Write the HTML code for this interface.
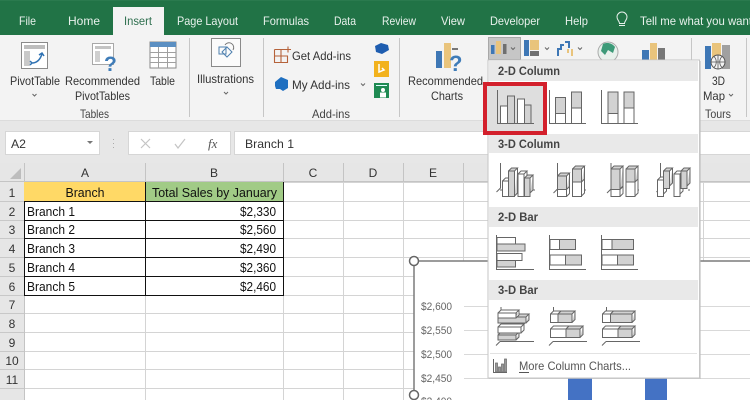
<!DOCTYPE html>
<html><head><meta charset="utf-8">
<style>
html,body{margin:0;padding:0;width:750px;height:400px;overflow:hidden;background:#fff}
svg{display:block;filter:blur(.3px)}
text{font-family:"Liberation Sans",sans-serif;font-size:12px;fill:#333}
.tab{fill:#e8f1ec;font-size:12px}
.hd{fill:#444;font-weight:bold;font-size:11.5px}
.c{fill:#111;font-size:12.5px}
.ax{fill:none;stroke:#666;stroke-width:1}
.w{fill:#fff;stroke:#666;stroke-width:1}
.g{fill:#d2d2d2;stroke:#666;stroke-width:1}
.gl{stroke:#d4d4d4;stroke-width:1}
.tb{stroke:#111;stroke-width:1}
.ch{fill:none;stroke:#666;stroke-width:1}
</style></head><body>
<svg width="750" height="400" viewBox="0 0 750 400" xmlns="http://www.w3.org/2000/svg">
<rect width="750" height="400" fill="#fff"/>
<!-- title/tabs -->
<rect width="750" height="35" fill="#217346"/>
<rect y="0" width="750" height="1" fill="#2a7a4e"/>
<rect x="113" y="7" width="51" height="28" fill="#f3f3f3"/>
<text class="tab" x="19" y="25" textLength="17" lengthAdjust="spacingAndGlyphs">File</text>
<text class="tab" x="68" y="25" textLength="32" lengthAdjust="spacingAndGlyphs">Home</text>
<text x="124" y="25" textLength="28" lengthAdjust="spacingAndGlyphs" style="fill:#2f6f4f">Insert</text>
<text class="tab" x="177" y="25" textLength="61" lengthAdjust="spacingAndGlyphs">Page Layout</text>
<text class="tab" x="263" y="25" textLength="46" lengthAdjust="spacingAndGlyphs">Formulas</text>
<text class="tab" x="334" y="25" textLength="22" lengthAdjust="spacingAndGlyphs">Data</text>
<text class="tab" x="382" y="25" textLength="34" lengthAdjust="spacingAndGlyphs">Review</text>
<text class="tab" x="441" y="25" textLength="24" lengthAdjust="spacingAndGlyphs">View</text>
<text class="tab" x="490" y="25" textLength="50" lengthAdjust="spacingAndGlyphs">Developer</text>
<text class="tab" x="565" y="25" textLength="23" lengthAdjust="spacingAndGlyphs">Help</text>
<path d="M619 25.500h6M619.500 23.500c0-2.500-2.500-3.500-2.500-6.500a5 5 0 0 1 10 0c0 3-2.500 4-2.500 6.500z" fill="none" stroke="#e8f1ec" stroke-width="1"/>
<text class="tab" x="640" y="25" textLength="112" lengthAdjust="spacingAndGlyphs">Tell me what you want</text>
<!-- ribbon -->
<rect y="35" width="750" height="86" fill="#f3f3f3"/>
<rect y="120" width="750" height="1" fill="#dcdcdc"/>
<rect y="121" width="750" height="42" fill="#e7e7e7"/>
<g stroke="#c6c6c6" stroke-width="1">
<path d="M189.500 38v79M263.500 38v79M399.500 38v79M691.500 38v79M746.500 38v79"/>
</g>
<!-- PivotTable icon -->
<rect x="21.500" y="42.500" width="26" height="26" fill="#fff" stroke="#8a8a8a"/>
<rect x="24" y="45" width="21" height="4" fill="#bdbdbd"/>
<rect x="24" y="51" width="6" height="15" fill="#c9c9c9"/>
<path d="M32 63c5 0 8-3 10-9M39 55l3-2 2 3M30 61l2 2-2 2" fill="none" stroke="#2f72b3" stroke-width="1.500"/>
<!-- Rec pivot icon -->
<rect x="92.500" y="43.500" width="21" height="21" fill="#fff" stroke="#a8a8a8"/>
<rect x="95" y="46" width="16" height="3" fill="#c4c4c4"/>
<rect x="95" y="51" width="5" height="11" fill="#cfcfcf"/>
<text x="104" y="71" style="font-size:21px;font-weight:bold;fill:#3f7cb8">?</text>
<!-- Table icon -->
<rect x="150" y="42" width="26" height="26" fill="#fff" stroke="#8a8a8a"/>
<rect x="150" y="42" width="26" height="5" fill="#5b8fc2"/>
<path d="M150 52.500h26M150 57.500h26M150 62.500h26M158.500 47v21M167.500 47v21" stroke="#a0a0a0" fill="none"/>
<text x="10" y="85" textLength="50" lengthAdjust="spacingAndGlyphs">PivotTable</text>
<path class="ch" d="M32.500 94l2 2 2-2"/>
<text x="65" y="85" textLength="75" lengthAdjust="spacingAndGlyphs">Recommended</text>
<text x="75" y="100" textLength="55" lengthAdjust="spacingAndGlyphs">PivotTables</text>
<text x="150" y="85" textLength="25" lengthAdjust="spacingAndGlyphs">Table</text>
<text x="80" y="118" textLength="29" lengthAdjust="spacingAndGlyphs" style="fill:#444">Tables</text>
<!-- Illustrations -->
<rect x="211.500" y="38.500" width="29" height="28" fill="#fbfbfb" stroke="#8a8a8a"/>
<path d="M219 47h7v7h-7zM227 47l5 5-5 5-5-5z" fill="none" stroke="#4d7fae"/>
<path d="M225 45a4.500 4.500 0 0 1 8 5" fill="none" stroke="#777"/>
<text x="197" y="83" textLength="57" lengthAdjust="spacingAndGlyphs">Illustrations</text>
<path class="ch" d="M224 92l2 2 2-2"/>
<!-- Add-ins -->
<path d="M274.500 49.500h13M274.500 49.500v13h13v-7M274.500 56h13M281 49.500v13M288 46.500v6M285 49.500h6" fill="none" stroke="#b5623a" stroke-width="1.100"/>
<text x="292" y="60" textLength="59" lengthAdjust="spacingAndGlyphs">Get Add-ins</text>
<path d="M275 82l6-5 7 3v8l-5 3-3-2h-4l-1-3z" fill="#1f6fc0"/>
<text x="292" y="89" textLength="58" lengthAdjust="spacingAndGlyphs">My Add-ins</text>
<path class="ch" d="M361 83.500l2 2 2-2"/>
<path d="M375 46l6-3 7 2 1 5-7 4-6-2z" fill="#1e5db0"/>
<rect x="374" y="61" width="15" height="16" fill="#f2b21d"/>
<path d="M379 64v8l5-2-2-2" fill="none" stroke="#fff" stroke-width="1.500"/>
<rect x="374" y="83" width="15" height="15" fill="#1e8a52"/>
<path d="M376 85.500h11" stroke="#dff" stroke-width="1"/>
<circle cx="383" cy="90" r="2" fill="#fff"/><rect x="380" y="92.500" width="6" height="5" fill="#fff"/>
<text x="312" y="118" textLength="38" lengthAdjust="spacingAndGlyphs" style="fill:#444">Add-ins</text>
<!-- Rec charts -->
<rect x="436" y="51" width="6" height="17" fill="#3e77b5"/>
<rect x="444" y="43" width="7" height="25" fill="#e9c47c"/>
<rect x="452" y="48" width="6" height="2" fill="#777"/>
<text x="449" y="71" style="font-size:22px;font-weight:bold;fill:#3f7cb8">?</text>
<text x="408" y="85" textLength="75" lengthAdjust="spacingAndGlyphs">Recommended</text>
<text x="431" y="100" textLength="32" lengthAdjust="spacingAndGlyphs">Charts</text>
<!-- small chart buttons -->
<rect x="488.500" y="37.500" width="32" height="22" fill="#c6c6c6" stroke="#a8a8a8"/>
<rect x="491" y="45" width="3.500" height="9" fill="#3e77b5"/>
<rect x="496" y="41" width="5" height="13" fill="#e9c47c"/>
<rect x="503" y="44" width="3.500" height="10" fill="#6f6f6f"/>
<path class="ch" d="M511 47.500l2 2 2-2"/>
<rect x="524" y="40" width="5" height="16" fill="#3e77b5"/>
<rect x="530" y="40" width="9" height="10" fill="#e9c47c"/>
<rect x="530" y="51" width="9" height="5" fill="#6f6f6f"/>
<path class="ch" d="M545 47.500l2 2 2-2"/>
<path d="M558 56v-7h3v-4h3M565 42h4v6" fill="none" stroke="#3e77b5" stroke-width="2"/>
<path d="M568 49v4M572 49v7" stroke="#e9c47c" stroke-width="2"/>
<path class="ch" d="M578 47.500l2 2 2-2"/>
<circle cx="608" cy="52" r="10" fill="#e8f1ec" stroke="#aaa"/>
<path d="M603 44c4-2 9-1 12 3l-2 6-5-3-3 5-4-4z" fill="#3c9a78"/>
<rect x="642" y="50" width="7" height="12" fill="#3e77b5"/>
<rect x="650" y="43" width="7" height="19" fill="#e9c47c"/>
<rect x="658" y="48" width="7" height="14" fill="#777"/>
<!-- 3D map -->
<rect x="705" y="46" width="6" height="23" fill="#3e77b5"/>
<rect x="712" y="43" width="9" height="20" fill="#e9c47c"/>
<rect x="722" y="45" width="8" height="24" fill="#a0a0a0"/>
<circle cx="718" cy="62" r="7" fill="#f3f3f3" stroke="#555"/>
<path d="M711 62h14M718 55v14M714 56.500c3 3 3 8 0 11M722 56.500c-3 3-3 8 0 11" fill="none" stroke="#555" stroke-width=".8"/>
<text x="712" y="85" textLength="13" lengthAdjust="spacingAndGlyphs">3D</text>
<text x="703" y="100" textLength="22" lengthAdjust="spacingAndGlyphs">Map</text>
<path class="ch" d="M729 94l2 2 2-2"/>
<text x="705" y="118" textLength="26" lengthAdjust="spacingAndGlyphs" style="fill:#444">Tours</text>
<!-- formula bar -->
<rect x="5.500" y="131.500" width="94" height="23" fill="#fff" stroke="#d6d6d6"/>
<text x="11" y="148" textLength="15" lengthAdjust="spacingAndGlyphs">A2</text>
<path d="M87 141h6l-3 3z" fill="#777"/>
<path d="M113.500 139v1M113.500 143v1M113.500 147v1" stroke="#aaa"/>
<rect x="128.500" y="131.500" width="102" height="23" fill="#fff" stroke="#d6d6d6"/>
<path d="M141 139l9 9M150 139l-9 9" stroke="#c4c4c4" stroke-width="1.200"/>
<path d="M175 144l3 4 7-9" fill="none" stroke="#c4c4c4" stroke-width="1.200"/>
<text x="208" y="148" style="font-family:'Liberation Serif',serif;font-style:italic;font-size:13px;fill:#555">fx</text>
<rect x="234.500" y="131.500" width="516" height="23" fill="#fff" stroke="#d6d6d6"/>
<text x="245" y="148" textLength="49" lengthAdjust="spacingAndGlyphs">Branch 1</text>
<!-- grid -->
<g class="gl">
<path d="M0 313.500h750M0 332.500h750M0 351.500h750M0 369.500h750M0 388.500h750M283 201.500h467M283 220.500h467M283 238.500h467M283 257.500h467M283 182.500h467M283 276.500h131M283 295.500h131M24.500 295v105M145.500 295v105M283.500 182v218M343.500 182v218M403.500 182v218M463.500 182v79M523.500 182v79M583.500 182v79M643.500 182v79M703.500 182v79"/>
</g>
<!-- headers -->
<rect y="163" width="750" height="19" fill="#e6e6e6"/>
<rect y="182" width="24" height="218" fill="#e6e6e6"/>
<path d="M24.500 163v237M145.500 163v19M283.500 163v19M343.500 163v19M403.500 163v19M463.500 163v19M0 181.500h750" stroke="#c4c4c4"/>
<path d="M0 201.500h24M0 220.500h24M0 238.500h24M0 257.500h24M0 276.500h24M0 295.500h24M0 313.500h24M0 332.500h24M0 351.500h24M0 369.500h24M0 388.500h24" stroke="#c8c8c8"/>
<path d="M10 179l11-11v11z" fill="#bdbdbd"/>
<g text-anchor="middle">
<text x="85" y="177">A</text><text x="214" y="177">B</text><text x="313" y="177">C</text><text x="373" y="177">D</text><text x="433" y="177">E</text>
<text x="12" y="197">1</text><text x="12" y="216">2</text><text x="12" y="234">3</text><text x="12" y="253">4</text><text x="12" y="272">5</text><text x="12" y="291">6</text><text x="12" y="309">7</text><text x="12" y="328">8</text><text x="12" y="347">9</text><text x="12" y="365">10</text><text x="12" y="384">11</text>
</g>
<!-- table -->
<rect x="24" y="182" width="121" height="19" fill="#ffd966"/>
<rect x="145" y="182" width="138" height="19" fill="#a1cb86"/>
<path class="tb" d="M24 201.500h259M24 220.500h259M24 238.500h259M24 257.500h259M24 276.500h259M24 295.500h259M24.500 201v95M145.500 182v114M283.500 182v114"/>
<text class="c" x="85" y="197" text-anchor="middle" textLength="39" lengthAdjust="spacingAndGlyphs">Branch</text>
<text class="c" x="152" y="197" textLength="125" lengthAdjust="spacingAndGlyphs">Total Sales by January</text>
<text class="c" x="27" y="216" textLength="48" lengthAdjust="spacingAndGlyphs">Branch 1</text>
<text class="c" x="27" y="234" textLength="48" lengthAdjust="spacingAndGlyphs">Branch 2</text>
<text class="c" x="27" y="253" textLength="48" lengthAdjust="spacingAndGlyphs">Branch 3</text>
<text class="c" x="27" y="272" textLength="48" lengthAdjust="spacingAndGlyphs">Branch 4</text>
<text class="c" x="27" y="291" textLength="48" lengthAdjust="spacingAndGlyphs">Branch 5</text>
<text class="c" x="240" y="216" textLength="36" lengthAdjust="spacingAndGlyphs">$2,330</text>
<text class="c" x="240" y="234" textLength="36" lengthAdjust="spacingAndGlyphs">$2,560</text>
<text class="c" x="240" y="253" textLength="36" lengthAdjust="spacingAndGlyphs">$2,490</text>
<text class="c" x="240" y="272" textLength="36" lengthAdjust="spacingAndGlyphs">$2,360</text>
<text class="c" x="240" y="291" textLength="36" lengthAdjust="spacingAndGlyphs">$2,460</text>
<!-- chart -->
<rect x="414" y="261" width="336" height="139" fill="#fff"/>
<path d="M464 306.500h286M464 330.500h286M464 354.500h286M464 378.500h286" stroke="#d9d9d9"/>
<rect x="568" y="378" width="24" height="22" fill="#4472c4"/>
<rect x="645" y="378" width="22" height="22" fill="#4472c4"/>
<path d="M414 261h336M414 261v134" fill="none" stroke="#7c7c7c" stroke-width="1.500"/>
<circle cx="414" cy="261" r="4.500" fill="#fff" stroke="#666" stroke-width="1.500"/>
<circle cx="414" cy="395" r="4.500" fill="#fff" stroke="#666" stroke-width="1.500"/>
<text x="421" y="310" textLength="31" lengthAdjust="spacingAndGlyphs" style="font-size:11px;fill:#666">$2,600</text>
<text x="421" y="334" textLength="31" lengthAdjust="spacingAndGlyphs" style="font-size:11px;fill:#666">$2,550</text>
<text x="421" y="358" textLength="31" lengthAdjust="spacingAndGlyphs" style="font-size:11px;fill:#666">$2,500</text>
<text x="421" y="382" textLength="31" lengthAdjust="spacingAndGlyphs" style="font-size:11px;fill:#666">$2,450</text>
<text x="421" y="405" textLength="31" lengthAdjust="spacingAndGlyphs" style="font-size:11px;fill:#666">$2,400</text>
<!-- dropdown -->
<rect x="489" y="61" width="212" height="318" fill="#bbb" opacity=".55"/>
<rect x="488" y="60" width="211.500" height="318" fill="#fff" stroke="#c6c6c6"/>
<rect x="489" y="61" width="209" height="20" fill="#e9e9e9"/>
<rect x="489" y="134" width="209" height="19" fill="#e9e9e9"/>
<rect x="489" y="207" width="209" height="20" fill="#e9e9e9"/>
<rect x="489" y="280" width="209" height="20" fill="#e9e9e9"/>
<text class="hd" x="498" y="75" textLength="62" lengthAdjust="spacingAndGlyphs">2-D Column</text>
<text class="hd" x="498" y="148" textLength="62" lengthAdjust="spacingAndGlyphs">3-D Column</text>
<text class="hd" x="498" y="221" textLength="40" lengthAdjust="spacingAndGlyphs">2-D Bar</text>
<text class="hd" x="498" y="294" textLength="40" lengthAdjust="spacingAndGlyphs">3-D Bar</text>
<path d="M490 353.500h207" stroke="#e2e2e2"/>
<!-- selected -->
<rect x="487" y="84" width="58" height="48" fill="#dedede"/>
<rect x="485" y="84" width="60" height="49" fill="none" stroke="#d3202c" stroke-width="4"/>
<!-- 2D col icons -->
<path class="ax" d="M497.500 90v33.500H534"/>
<rect class="w" x="500.500" y="106" width="7" height="17.500"/><rect class="g" x="507.500" y="96" width="7" height="27.500"/>
<rect class="w" x="517.500" y="99" width="7" height="24.500"/><rect class="g" x="524.500" y="105" width="6.500" height="18.500"/>
<path class="ax" d="M549.500 90v33.500H586"/>
<rect class="g" x="555.500" y="97.500" width="10" height="16"/><rect class="w" x="555.500" y="113.500" width="10" height="10"/>
<rect class="g" x="571.500" y="92" width="10" height="16"/><rect class="w" x="571.500" y="108" width="10" height="15.500"/>
<path class="ax" d="M601.500 90v33.500H638"/>
<rect class="g" x="608" y="92" width="10" height="21.500"/><rect class="w" x="608" y="113.500" width="10" height="10"/>
<rect class="g" x="624" y="92" width="10" height="16"/><rect class="w" x="624" y="108" width="10" height="15.500"/>
<!-- 3D col icons -->
<path class="ax" d="M500.500 163v25l-4 4M500 190h2M530 190h5"/>
<path class="w" d="M502.500 181h6v15.500h-6zl3-3h6l-3 3m3-3v15l-3 3"/>
<path class="g" d="M508.500 171h6v25.500h-6zl3-3h6l-3 3m3-3v25l-3 3"/>
<path class="w" d="M518 174h6v22.500h-6zl3-3h6l-3 3m3-3v22l-3 3"/>
<path class="g" d="M524.500 178h5.500v18.500h-5.500zl3-3h5.500l-3 3m3-3v15l-3 3"/>
<path class="ax" d="M557.500 163v26l-4 4M584 190h2"/>
<path class="g" d="M557.500 176h9v13.500h-9zl3-3h9l-3 3m3-3v14l-3 3"/>
<path class="w" d="M557.500 189.500h9v7h-9zm9 0l3-3v7l-3 3"/>
<path class="g" d="M572.500 169h9v13h-9zl3-3h9l-3 3m3-3v14l-3 3"/>
<path class="w" d="M572.500 182h9v14.500h-9zm9 0l3-3v14l-3 3"/>
<path class="ax" d="M611 163v26l-4 4M636 190h3"/>
<path class="g" d="M611 169h9v20.500h-9zl3-3h9l-3 3m3-3v20l-3 3"/>
<path class="w" d="M611 189.500h9v7h-9zm9 0l3-3v7l-3 3"/>
<path class="g" d="M626 169h9v13h-9zl3-3h9l-3 3m3-3v14l-3 3"/>
<path class="w" d="M626 182h9v14.500h-9zm9 0l3-3v14l-3 3"/>
<path class="ax" d="M660.500 163v25l-4 4M688 190h2"/>
<path class="w" d="M657.500 180h6v16.500h-6zl3-3h6l-3 3m3-3v14l-3 3"/>
<path class="g" d="M663.500 171h6v17.500h-6zl3-3h6l-3 3m3-3v15l-3 3"/>
<path class="w" d="M674 174h6v22.500h-6zl3-3h6l-3 3m3-3v20l-3 3"/>
<path class="g" d="M681 171h6v17.500h-6zl3-3h6l-3 3m3-3v15l-3 3"/>
<!-- 2D bar -->
<path class="ax" d="M496.500 235v34.500H534"/>
<rect class="w" x="497" y="237.500" width="18.500" height="6.500"/><rect class="g" x="497" y="244" width="28" height="7"/>
<rect class="w" x="497" y="253.500" width="25" height="7"/><rect class="g" x="497" y="260.500" width="18.500" height="6.500"/>
<path class="ax" d="M549.500 235v34.500H586"/>
<rect class="w" x="550" y="239.500" width="9.500" height="10"/><rect class="g" x="559.500" y="239.500" width="16" height="10"/>
<rect class="w" x="550" y="255" width="15.500" height="10"/><rect class="g" x="565.500" y="255" width="16" height="10"/>
<path class="ax" d="M601.500 235v34.500H638"/>
<rect class="w" x="602" y="239.500" width="10" height="10"/><rect class="g" x="612" y="239.500" width="21.500" height="10"/>
<rect class="w" x="602" y="255" width="15.500" height="10"/><rect class="g" x="617.500" y="255" width="16" height="10"/>
<!-- 3D bar -->
<path class="ax" d="M500 341.500h34M500 341.500l-4 4M501 307v3"/>
<path class="g" d="M498 317h28v6h-28zl3-3h28l-3 3m3-3v6l-3 3"/>
<path class="w" d="M498 313h18v5h-18zl3-3h18l-3 3m3-3v5l-3 3"/>
<path class="g" d="M498 335h18v5h-18zl3-3h18l-3 3m3-3v5l-3 3"/>
<path class="w" d="M498 327h23v6h-23zl3-3h23l-3 3m3-3v6l-3 3"/>
<path class="ax" d="M553 341.500h34M553 341.500l-4 4M553.500 307v6"/>
<path class="w" d="M550.500 314h7.500v8.500h-7.500zl3-3h7.500l-3 3"/>
<path class="g" d="M558 314h14v8.500h-14zl3-3h14l-3 3m3-3v8.500l-3 3"/>
<path class="w" d="M550.500 329h15.500v8.500h-15.500zl3-3h15.500l-3 3"/>
<path class="g" d="M566 329h14v8.500h-14zl3-3h14l-3 3m3-3v8.500l-3 3"/>
<path class="ax" d="M606 341.500h34M606 341.500l-4 4M606.500 307v6"/>
<path class="w" d="M602.500 314h8v8.500h-8zl3-3h8l-3 3"/>
<path class="g" d="M610.500 314h21.500v8.500h-21.500zl3-3h21.500l-3 3m3-3v8.500l-3 3"/>
<path class="w" d="M602.500 329h15.500v8.500h-15.500zl3-3h15.500l-3 3"/>
<path class="g" d="M618 329h14v8.500h-14zl3-3h14l-3 3m3-3v8.500l-3 3"/>
<!-- more -->
<path d="M493.500 359v13.500H507" fill="none" stroke="#666"/>
<path d="M495.500 363h2v9h-2zM498.500 367h2v5h-2zM501.500 364h2v8h-2zM504.500 359h2v13h-2z" fill="#999" stroke="#666" stroke-width=".7"/>
<text x="519" y="370" textLength="112" lengthAdjust="spacingAndGlyphs" style="fill:#555">More Column Charts...</text>
<path d="M519 372.500h10" stroke="#555"/>
</svg>
</body></html>
